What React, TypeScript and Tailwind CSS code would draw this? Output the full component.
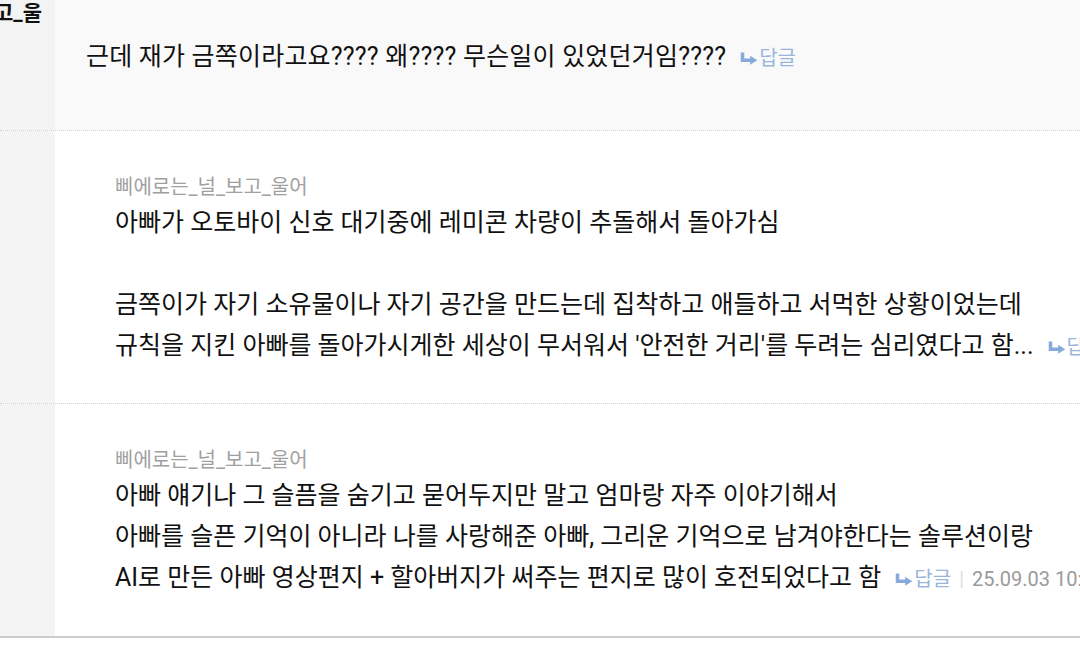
import React from "react";

const font = { fontFamily: "Roboto, 'Noto Sans CJK KR', 'Noto Sans', sans-serif" };

function ReplyArrow() {
    return (
        <svg width="18" height="13" viewBox="0 0 15 11" className="inline-block mr-[1px] -mt-[3px]">
            <path d="M2 0.5 V7 H10" stroke="#86aadb" strokeWidth="3" fill="none" />
            <path d="M8.5 3.2 L14.5 7 L8.5 10.8 Z" fill="#86aadb" />
        </svg>
    );
}

function Reply({ date }: { date?: string }) {
    return (
        <span className="ml-[14px] text-[20px] text-[#9ab5da] whitespace-nowrap">
            <ReplyArrow />답글
            {date && (
                <>
                    <span className="mx-[8px] text-[#dddddd]">|</span>
                    <span className="text-[#9a9a9a]">{date}</span>
                </>
            )}
        </span>
    );
}

function SubComment({ lines, date }: { lines: string[]; date?: string }) {
    return (
        <div className="flex border-b border-dotted border-[#cfcfcf]">
            <div className="w-[55px] shrink-0 bg-[#f4f4f4]" />
            <div className="flex-1 pl-[60px] pt-[44px] pb-[37px] whitespace-nowrap">
                <div className="text-[20px] leading-[24px] text-[#a0a0a0] mb-[3px]">삐에로는_널_보고_울어</div>
                {lines.map((l, i) => (
                    <div key={i} className="text-[25px] leading-[41px] text-[#111] h-[41px]">
                        {l}
                        {i === lines.length - 1 && <Reply date={date} />}
                    </div>
                ))}
            </div>
        </div>
    );
}

export default function App() {
    return (
        <div className="w-[1080px] h-[657px] overflow-hidden bg-white" style={font}>
            <div className="flex h-[131px] border-b border-dotted border-[#cfcfcf]">
                <div className="w-[55px] shrink-0 bg-[#f3f3f3] relative">
                    <span className="absolute right-[13px] top-0 text-[21px] leading-[26px] font-bold text-[#111] whitespace-nowrap">고_울</span>
                </div>
                <div className="flex-1 bg-[#f9f9f9] pl-[31px] pt-[40px] whitespace-nowrap">
                    <span className="text-[25px] leading-[34px] text-[#111] tracking-[0.2px]">근데 재가 금쪽이라고요???? 왜???? 무슨일이 있었던거임????</span>
                    <Reply />
                </div>
            </div>
            <SubComment
                lines={[
                    "아빠가 오토바이 신호 대기중에 레미콘 차량이 추돌해서 돌아가심",
                    "",
                    "금쪽이가 자기 소유물이나 자기 공간을 만드는데 집착하고 애들하고 서먹한 상황이었는데",
                    "규칙을 지킨 아빠를 돌아가시게한 세상이 무서워서 '안전한 거리'를 두려는 심리였다고 함...",
                ]}
            />
            <div className="flex border-b-2 border-[#cccccc]">
                <div className="w-[55px] shrink-0 bg-[#f4f4f4]" />
                <div className="flex-1 pl-[60px] pt-[44px] pb-[36px] whitespace-nowrap">
                    <div className="text-[20px] leading-[24px] text-[#a0a0a0] mb-[3px]">삐에로는_널_보고_울어</div>
                    <div className="text-[25px] leading-[41px] text-[#111]">아빠 얘기나 그 슬픔을 숨기고 묻어두지만 말고 엄마랑 자주 이야기해서</div>
                    <div className="text-[25px] leading-[41px] text-[#111]">아빠를 슬픈 기억이 아니라 나를 사랑해준 아빠, 그리운 기억으로 남겨야한다는 솔루션이랑</div>
                    <div className="text-[25px] leading-[41px] text-[#111]">
                        AI로 만든 아빠 영상편지 + 할아버지가 써주는 편지로 많이 호전되었다고 함
                        <Reply date="25.09.03 10:12" />
                    </div>
                </div>
            </div>
        </div>
    );
}
